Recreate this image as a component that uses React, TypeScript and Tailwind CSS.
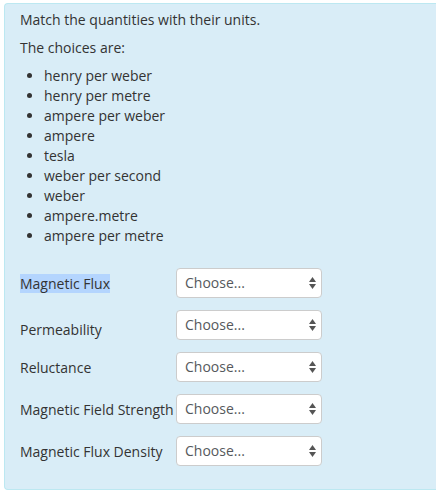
import React from 'react';

const choices = [
    'henry per weber',
    'henry per metre',
    'ampere per weber',
    'ampere',
    'tesla',
    'weber per second',
    'weber',
    'ampere.metre',
    'ampere per metre',
];

const rows = [
    { label: 'Magnetic Flux', selected: true },
    { label: 'Permeability', offset: true },
    { label: 'Reluctance' },
    { label: 'Magnetic Field Strength' },
    { label: 'Magnetic Flux Density' },
];

const ChooseSelect: React.FC = () => (
    <div className="relative w-[146px] h-[30px]">
        <select
            className="appearance-none w-full h-full bg-white border border-[#cccccc] rounded-[4px] pl-[8px] pr-6 text-[14px] text-[#55595c] outline-none"
            defaultValue=""
        >
            <option value="">Choose...</option>
        </select>
        {/* up/down arrows */}
        <svg className="absolute right-[6px] top-[9px] pointer-events-none" width="7" height="12" viewBox="0 0 7 12">
            <path d="M3.5 0 L7 5 L0 5 Z" fill="#555" />
            <path d="M3.5 12 L7 7 L0 7 Z" fill="#555" />
        </svg>
    </div>
);

export default function App() {
    return (
        <div className="bg-white min-h-[491px] pl-[4px] pt-[3px] font-['Open_Sans',sans-serif] text-[14px] leading-[20px] text-[#333]">
            <div className="bg-[#d9edf7] border border-[#bce8f1] border-r-0 rounded-l-[4px] h-[487px] pl-[15px] pt-[6px]">
                <p className="mb-[8px]">Match the quantities with their units.</p>
                <p className="mb-[8px]">The choices are:</p>
                <ul className="list-disc pl-[24px] mb-[22px]">
                    {choices.map((c) => (
                        <li key={c}>{c}</li>
                    ))}
                </ul>
                <div className="flex flex-col gap-[12px]">
                    {rows.map((r) => (
                        <div key={r.label} className="flex items-center">
                            <div className={`w-[156px] ${r.offset ? 'pt-[10px]' : 'pt-[2px]'}`}>
                                <span className={r.selected ? 'bg-[#b4d5fe]' : ''}>{r.label}</span>
                            </div>
                            <ChooseSelect />
                        </div>
                    ))}
                </div>
            </div>
        </div>
    );
}
